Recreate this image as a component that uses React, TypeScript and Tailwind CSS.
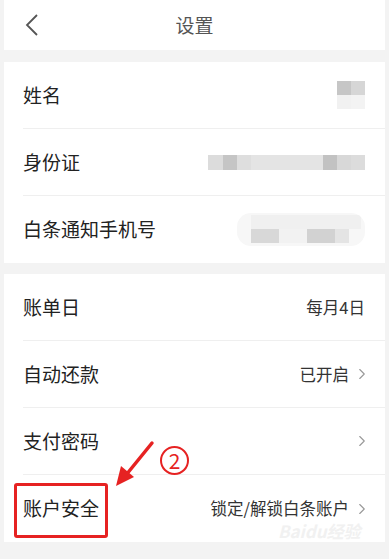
import { ChevronRight } from 'lucide-react'

const font = { fontFamily: '"Noto Sans CJK SC", "Noto Sans", sans-serif' }

function Row({ label, last, children }: { label: string; last?: boolean; children?: React.ReactNode }) {
  return (
    <div className="flex h-[67px] items-stretch pl-[19px]">
      <div className={`flex flex-1 items-center justify-between pr-[14px] ${last ? '' : 'border-b border-[#efefef]'}`}>
        <span className="text-[19px] text-[#222]">{label}</span>
        <div className="flex items-center text-[16.5px] text-[#333]">{children}</div>
      </div>
    </div>
  )
}

function Chevron() {
  return <ChevronRight className="ml-[4px] size-[18px] text-[#999]" strokeWidth={1.5} />
}

export default function App() {
  return (
    <div className="relative h-[559px] w-[389px] overflow-hidden bg-[#f3f3f3]" style={font}>
      <header className="mx-[4px] flex h-[50px] items-center bg-white">
        <svg width="16" height="24" viewBox="0 0 16 24" className="ml-[20px]">
          <path d="M13 2 L3 12 L13 22" fill="none" stroke="#555" strokeWidth="1.8" />
        </svg>
        <span className="flex-1 pr-[36px] text-center text-[19px] text-[#555]">设置</span>
      </header>

      <section className="mx-[4px] mt-[12px] bg-white">
        <Row label="姓名">
          <div className="mr-[6px] grid grid-cols-2">
            <div className="h-[14px] w-[14px] bg-[#c6c6c6]" />
            <div className="h-[14px] w-[14px] bg-[#d6d6d6]" />
            <div className="h-[14px] w-[14px] bg-[#f1f1f1]" />
            <div className="h-[14px] w-[14px] bg-[#f3f3f3]" />
          </div>
        </Row>
        <Row label="身份证">
          <div className="mr-[6px] flex h-[15px]">
            <div className="w-[15px] bg-[#dcdcdc]" />
            <div className="w-[14px] bg-[#c5c5c5]" />
            <div className="w-[14px] bg-[#dedede]" />
            <div className="w-[72px] bg-[#e4e4e4]" />
            <div className="w-[14px] bg-[#c2c2c2]" />
            <div className="w-[14px] bg-[#d8d8d8]" />
            <div className="w-[14px] bg-[#dcdcdc]" />
          </div>
        </Row>
        <Row label="白条通知手机号" last>
          <div className="mr-[6px] flex h-[33px] w-[128px] flex-col overflow-hidden rounded-[14px] bg-[#f7f7f7]">
            <div className="ml-[14px] mt-[2px] h-[14px] w-[110px] bg-[#f0f0f0]" />
            <div className="ml-[14px] flex h-[14px]">
              <div className="w-[28px] bg-[#d8d8d8]" />
              <div className="w-[28px] bg-[#f2f2f2]" />
              <div className="w-[28px] bg-[#d2d2d2]" />
              <div className="w-[14px] bg-[#e4e4e4]" />
            </div>
          </div>
        </Row>
      </section>

      <section className="mx-[4px] mt-[11px] bg-white">
        <Row label="账单日">
          <span className="pr-[6px]">每月4日</span>
        </Row>
        <Row label="自动还款">
          <span>已开启</span>
          <Chevron />
        </Row>
        <Row label="支付密码">
          <Chevron />
        </Row>
        <Row label="账户安全" last>
          <span>锁定/解锁白条账户</span>
          <Chevron />
        </Row>
      </section>

      {/* annotation overlay */}
      <div className="absolute left-[14px] top-[483px] h-[55px] w-[94px] rounded-[3px] border-[3px] border-[#e62222]" />
      <svg className="absolute left-[112px] top-[440px]" width="44" height="50" viewBox="0 0 44 50">
        <path d="M40 3 L14 35" stroke="#e62222" strokeWidth="3.5" strokeLinecap="round" />
        <path d="M4 46 L9 26 L22 37 Z" fill="#e62222" />
      </svg>
      <div className="absolute left-[160px] top-[446px] flex h-[29px] w-[29px] items-center justify-center rounded-full border-[2px] border-[#e62222] text-[21px] leading-none text-[#e62222]">
        2
      </div>
      <div className="pointer-events-none absolute left-[278px] top-[518px] text-[17px] font-bold italic text-[#f1f1f1]">
        Baidu经验
      </div>
    </div>
  )
}
